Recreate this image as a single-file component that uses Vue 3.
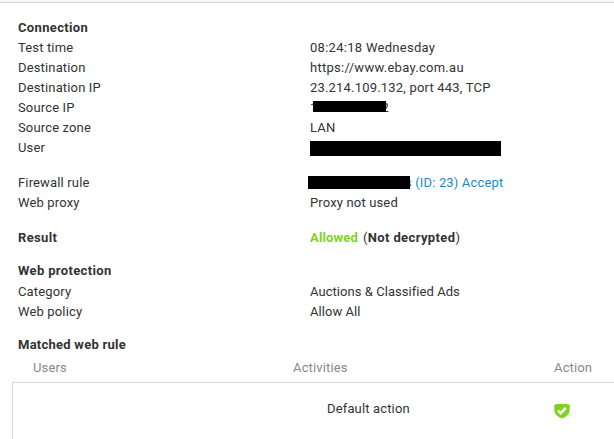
<template>
  <div class="policy-result">
    <div class="top-bar"></div>
    <div class="content">
      <section class="group connection">
        <h4>Connection</h4>
        <div v-for="row in connection" :key="row.label" class="row">
          <span class="label">{{ row.label }}</span>
          <span class="value" :class="row.type">
            <template v-if="row.type === 'source-ip'"><span>1</span><span>2</span><i class="mask"></i></template>
            <i v-else-if="row.type === 'user'" class="mask"></i>
            <template v-else>{{ row.value }}</template>
          </span>
        </div>
      </section>

      <section class="group">
        <div class="row">
          <span class="label">Firewall rule</span>
          <a class="value rule-link"><span>s</span> (ID: 23) Accept<i class="mask"></i></a>
        </div>
        <div class="row">
          <span class="label">Web proxy</span>
          <span class="value proxy">Proxy not used</span>
        </div>
      </section>

      <section class="group result">
        <div class="row">
          <h4 class="label">Result</h4>
          <span class="value"><b class="allowed">Allowed</b><span class="decrypt">(<b>Not decrypted</b>)</span></span>
        </div>
      </section>

      <section class="group protection">
        <h4>Web protection</h4>
        <div v-for="row in protection" :key="row.label" class="row">
          <span class="label">{{ row.label }}</span>
          <span class="value" :class="row.type">{{ row.value }}</span>
        </div>
      </section>

      <h4 class="matched">Matched web rule</h4>
    </div>

    <div class="rule-head">
      <span>Users</span>
      <span>Activities</span>
      <span>Action</span>
    </div>
    <div class="rule-body">
      <span></span>
      <span class="activity">Default action</span>
      <span class="action">
        <svg width="16" height="16" viewBox="0 0 16 16">
          <path d="M0.3 1.4 Q2.7 1.8 4 0.5 Q6.2 1.5 8 0.5 Q9.8 1.5 12 0.5 Q13.3 1.8 15.7 1.4 V7.4 Q15.4 12.6 8 15.5 Q0.6 12.6 0.3 7.4 Z" fill="#7ed321" />
          <path d="M4 7.6 L6.8 10.1 L11.8 4.8" fill="none" stroke="#fff" stroke-width="2.6" />
        </svg>
      </span>
    </div>
  </div>
</template>

<script setup>
const connection = [
  { label: 'Test time', value: '08:24:18 Wednesday', type: 'time' },
  { label: 'Destination', value: 'https://www.ebay.com.au', type: 'url' },
  { label: 'Destination IP', value: '23.214.109.132, port 443, TCP', type: 'dest-ip' },
  { label: 'Source IP', type: 'source-ip' },
  { label: 'Source zone', value: 'LAN', type: 'zone' },
  { label: 'User', type: 'user' },
];

const protection = [
  { label: 'Category', value: 'Auctions & Classified Ads', type: 'category' },
  { label: 'Web policy', value: 'Allow All', type: 'policy' },
];
</script>

<style>
body {
  margin: 0;
  background: #fff;
}
</style>

<style scoped>
.policy-result {
  height: 439px;
  overflow: hidden;
  font-family: Roboto, "Liberation Sans", sans-serif;
  font-size: 13px;
  line-height: 20px;
  letter-spacing: 0.15px;
  color: #333;
  white-space: nowrap;
}

.top-bar {
  height: 2px;
  background: #f8f8f8;
  border-bottom: 1px solid #d8d8d8;
}

.content {
  padding: 15px 0 0 18px;
}

h4 {
  margin: 0;
  font-size: 13px;
  font-weight: 700;
  letter-spacing: 0.35px;
}

.group {
  margin-bottom: 15px;
}

.group.result {
  margin-bottom: 13px;
}

.group.protection {
  margin-bottom: 13px;
}

.protection h4 {
  margin-bottom: 1px;
}

.row {
  display: flex;
  height: 20px;
}

.label {
  width: 292px;
}

.value {
  position: relative;
}

.time,
.url {
  letter-spacing: 0.28px;
}

.dest-ip {
  letter-spacing: 0.19px;
}

.category,
.policy {
  letter-spacing: 0.05px;
}

.mask {
  position: absolute;
  background: #000;
}

.source-ip {
  display: flex;
  justify-content: space-between;
  width: 79px;
}

.source-ip .mask {
  top: 3px;
  left: 3px;
  width: 73px;
  height: 11px;
}

.user .mask {
  top: 3px;
  left: 0;
  width: 191px;
  height: 15px;
}

.rule-link {
  padding-left: 95px;
  color: #1f88ca;
}

.rule-link .mask {
  top: 3px;
  left: -2px;
  width: 102px;
  height: 13px;
}

.allowed {
  margin-right: 5px;
  color: #7ed321;
}

.decrypt {
  letter-spacing: 0.38px;
}

.matched {
  letter-spacing: 0.25px;
}

.rule-head,
.rule-body {
  display: grid;
  grid-template-columns: 260px 261px 1fr;
}

.rule-head {
  padding: 3px 0 4px 33px;
  color: #84898f;
}

.rule-body {
  height: 60px;
  margin-left: 12px;
  padding: 16px 0 0 20px;
  border-top: 1px solid #d5d8db;
  border-left: 1px solid #d5d8db;
}

.activity {
  padding-left: 34px;
}

.action svg {
  display: block;
  margin-top: 4px;
}
</style>
